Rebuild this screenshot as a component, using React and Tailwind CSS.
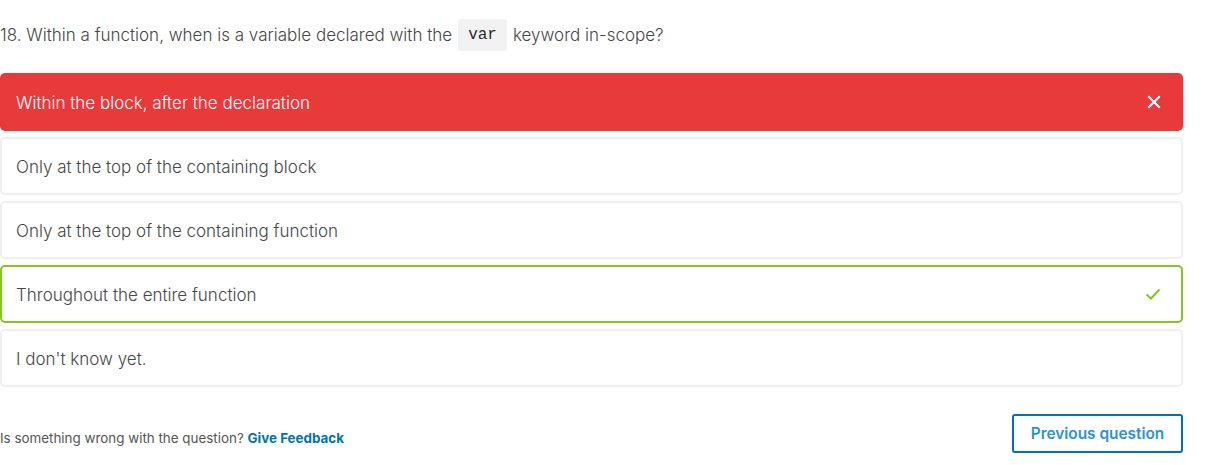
import React from "react";

const font = { fontFamily: "Inter, 'Noto Sans', sans-serif" };

function Option({ children, variant }) {
  if (variant === "wrong") {
    return (
      <div className="flex h-[58px] items-center justify-between rounded-[5px] bg-[#e8393b] pl-4 pr-[22px] pt-[3px] text-[17px] font-light text-white">
        <span>{children}</span>
        <svg width="14" height="14" viewBox="0 0 14 14" fill="none" className="-mt-[3px]">
          <path d="M2 2L12 12M12 2L2 12" stroke="white" strokeWidth="2.2" strokeLinecap="square" />
        </svg>
      </div>
    );
  }
  if (variant === "right") {
    return (
      <div className="flex h-[58px] items-center justify-between rounded-[5px] border-2 border-[#83c623] pl-[14px] pr-[20px] pt-[3px] text-[17px] font-light text-[#474747]">
        <span>{children}</span>
        <svg width="16" height="12" viewBox="0 0 16 12" fill="none" className="-mt-[3px]">
          <path d="M1.5 6.5L6 10.5L14.5 1.5" stroke="#83c623" strokeWidth="2" />
        </svg>
      </div>
    );
  }
  return (
    <div className="flex h-[58px] items-center rounded-[5px] border-2 border-[#efefef] pl-[14px] pt-[3px] text-[17px] font-light text-[#474747]">
      <span>{children}</span>
    </div>
  );
}

export default function App() {
  return (
    <div className="h-[465px] w-[1226px] bg-white" style={font}>
      <div className="w-[1183px]">
        <div className="flex h-[70px] items-center pt-[1px] text-[17px] font-light text-[#474747]">
          <span>18. Within a function, when is a variable declared with the</span>
          <code
            className="mx-[6px] -mt-[1px] flex h-[32px] items-center rounded-[3px] bg-[#f2f2f2] px-[10px] text-[16px] text-[#2a2a2a]"
            style={{ fontFamily: "'Liberation Mono', monospace" }}
          >
            var
          </code>
          <span>keyword in-scope?</span>
        </div>
        <div className="mt-[3px] flex flex-col gap-[6px]">
          <Option variant="wrong">Within the block, after the declaration</Option>
          <Option>Only at the top of the containing block</Option>
          <Option>Only at the top of the containing function</Option>
          <Option variant="right">Throughout the entire function</Option>
          <Option>I don't know yet.</Option>
        </div>
        <div className="mt-[27px] flex items-center justify-between">
          <div className="pt-[10px] text-[13.4px] text-[#555]">
            Is something wrong with the question?{" "}
            <span className="font-bold text-[#0073b1]">Give Feedback</span>
          </div>
          <button className="flex h-[39px] w-[171px] items-center justify-center rounded-[3px] border-2 border-[#0073b1] text-[15.4px] font-semibold text-[#2a93d5]">
            Previous question
          </button>
        </div>
      </div>
    </div>
  );
}
